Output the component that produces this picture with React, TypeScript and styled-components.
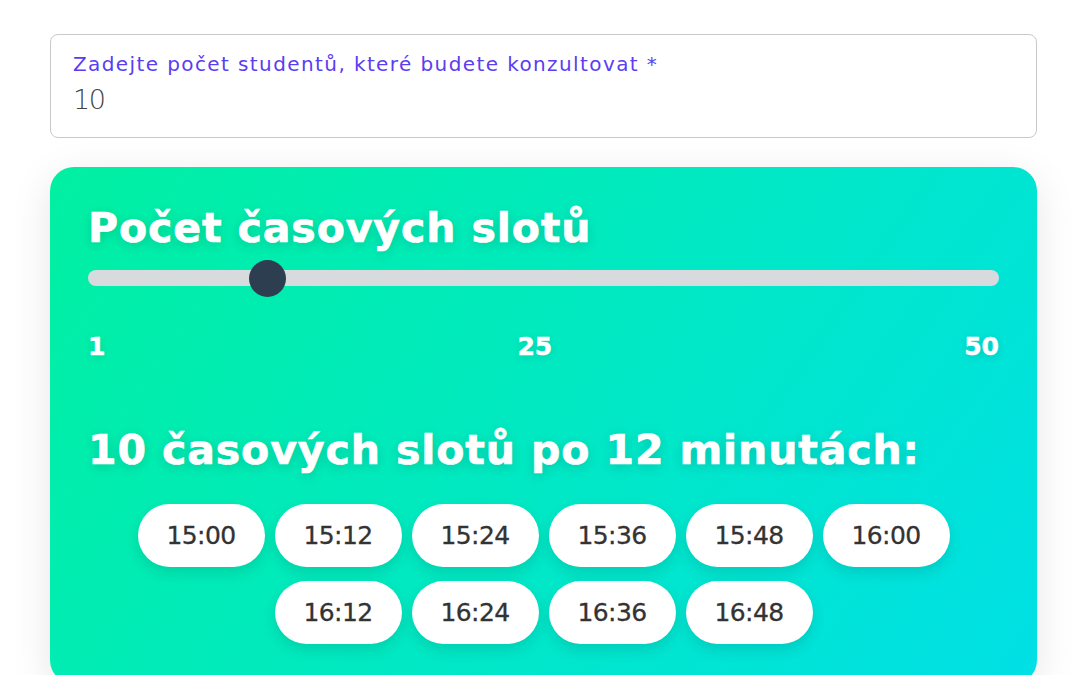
import React, { useState } from "react";
import styled, { createGlobalStyle } from "styled-components";

const GlobalStyle = createGlobalStyle`
  html, body {
    margin: 0;
    padding: 0;
    background: #ffffff;
  }
  body {
    font-family: "DejaVu Sans", "Liberation Sans", sans-serif;
  }
  * { box-sizing: border-box; }
`;

const Page = styled.div`
  width: 1080px;
  height: 675px;
  overflow: hidden;
  padding: 34px 43px 0 50px;
  display: flex;
  flex-direction: column;
  gap: 29px;
`;

const Field = styled.label`
  flex-shrink: 0;
  display: flex;
  flex-direction: column;
  height: 104px;
  border: 1.5px solid #c9c9cc;
  border-radius: 8px;
  padding: 16.5px 22px 0 22px;
  gap: 7px;
`;

const FieldLabel = styled.span`
  font-family: "DejaVu Sans", sans-serif;
  font-size: 20px;
  color: #5b3df2;
  line-height: 24px;
  letter-spacing: 1.4px;
  white-space: nowrap;
`;

const FieldValue = styled.input`
  border: none;
  outline: none;
  background: transparent;
  padding: 0;
  width: 100%;
  font-family: "DejaVu Sans", sans-serif;
  font-weight: 200;
  font-size: 27px;
  line-height: 34px;
  height: 34px;
  letter-spacing: -1.5px;
  color: #444444;
`;

const Card = styled.section`
  flex-shrink: 0;
  border-radius: 24px;
  padding: 33px 38px 40px 38px;
  background: linear-gradient(125deg, #00f0a2 0%, #00eabf 45%, #00e0e6 100%);
  box-shadow: 0 10px 40px rgba(0, 0, 0, 0.1);
  display: flex;
  flex-direction: column;
`;

const Heading = styled.h2`
  margin: 0;
  font-family: "DejaVu Sans", sans-serif;
  font-weight: 800;
  font-size: 41px;
  line-height: 56px;
  color: #ffffff;
  letter-spacing: 0.9px;
  white-space: nowrap;
  -webkit-text-stroke: 0.7px #ffffff;
  text-shadow: 0 3px 12px rgba(0, 40, 40, 0.18);
`;

const Range = styled.input`
  -webkit-appearance: none;
  appearance: none;
  width: 100%;
  height: 38px;
  margin: 3px 0 0 0;
  background: transparent;
  outline: none;

  &::-webkit-slider-runnable-track {
    height: 16px;
    border-radius: 8px;
    background: #d7dbde;
  }
  &::-webkit-slider-thumb {
    -webkit-appearance: none;
    appearance: none;
    width: 37px;
    height: 37px;
    border-radius: 50%;
    background: #2c3e50;
    margin-top: -10.5px;
    border: none;
  }
`;

const Scale = styled.div`
  display: flex;
  justify-content: space-between;
  margin-top: 35px;
  font-family: "DejaVu Sans", sans-serif;
  font-weight: 800;
  font-size: 25px;
  line-height: 30px;
  color: #ffffff;
  -webkit-text-stroke: 0.5px #ffffff;
  text-shadow: 0 2px 8px rgba(0, 40, 40, 0.15);
`;

const SlotsHeading = styled(Heading)`
  margin-top: 60px;
`;

const Slots = styled.div`
  display: flex;
  flex-wrap: wrap;
  justify-content: center;
  gap: 14px 10px;
  margin-top: 26px;
`;

const Slot = styled.button`
  width: 127px;
  height: 63px;
  border: none;
  border-radius: 32px;
  background: #ffffff;
  font-family: "DejaVu Sans", sans-serif;
  font-size: 25px;
  letter-spacing: -0.6px;
  color: #333333;
  -webkit-text-stroke: 0.3px #333333;
  box-shadow: 0 6px 14px rgba(0, 60, 60, 0.14);
  cursor: pointer;
`;

const times = [
  "15:00", "15:12", "15:24", "15:36", "15:48", "16:00",
  "16:12", "16:24", "16:36", "16:48",
];

export default function App() {
  const [students, setStudents] = useState("10");
  const [slots, setSlots] = useState(10);
  return (
    <>
      <GlobalStyle />
      <Page>
        <Field>
          <FieldLabel>Zadejte počet studentů, které budete konzultovat *</FieldLabel>
          <FieldValue value={students} onChange={(e) => setStudents(e.target.value)} />
        </Field>
        <Card>
          <Heading>Počet časových slotů</Heading>
          <Range
            type="range"
            min={1}
            max={50}
            value={slots}
            onChange={(e) => setSlots(Number(e.target.value))}
          />
          <Scale>
            <span>1</span>
            <span>25</span>
            <span>50</span>
          </Scale>
          <SlotsHeading>{slots} časových slotů po 12 minutách:</SlotsHeading>
          <Slots>
            {times.map((t) => (
              <Slot key={t}>{t}</Slot>
            ))}
          </Slots>
        </Card>
      </Page>
    </>
  );
}
